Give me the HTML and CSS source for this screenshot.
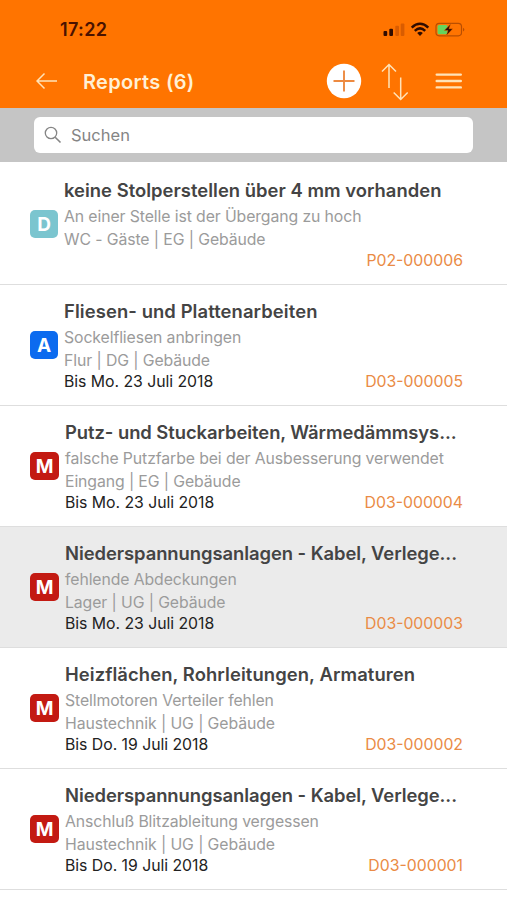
FILE: index.html
```html
<!DOCTYPE html>
<html lang="de">
<head>
<meta charset="utf-8">
<title>Reports</title>
<link rel="stylesheet" href="styles.css">
</head>
<body>
<header class="header">
  <div class="status">
    <span class="time">17:22</span>
    <svg class="status-icons" width="84" height="18" viewBox="0 0 84 18">
      <g fill="#300c00"><rect x="0.5" y="10" width="3.7" height="5" rx="1"/><rect x="6.3" y="7.7" width="3.7" height="7.3" rx="1"/></g>
      <g fill="#d95c00"><rect x="12.3" y="4.8" width="3.7" height="10.2" rx="1"/><rect x="17.7" y="2.5" width="3.7" height="12.5" rx="1"/></g>
      <g fill="none" stroke="#300c00" stroke-width="2.5"><path d="M28.700 6.600Q37 -1 45.300 6.600"/><path d="M31.800 9.800Q37 5 42.200 9.800"/></g>
      <path d="M34.200 12Q37 9.700 39.800 12L37 15Z" fill="#300c00"/>
      <rect x="53" y="2.400" width="25.500" height="12.400" rx="3.200" fill="none" stroke="#b94e00" stroke-width="1.200"/>
      <path d="M80.200 6.800Q82.500 8.700 80.200 10.600Z" fill="#a94600"/>
      <rect x="54.600" y="4" width="10" height="9.200" rx="1.500" fill="#65d45c"/>
      <path d="M67.800 2.800L61.200 9.600H65L63.200 14.800L69.800 7.700H66Z" fill="#300c00" stroke="#ff7400" stroke-width=".4"/>
    </svg>
  </div>
  <nav class="toolbar">
    <svg class="back" width="22" height="18" viewBox="0 0 22 18" fill="none" stroke="#ffe3b8" stroke-width="1.500"><path d="M8.500 1.500L1 9L8.500 16.500M1 9H21"/></svg>
    <h1 class="heading">Reports (6)</h1>
    <svg class="add" width="36" height="36" viewBox="0 0 36 36"><circle cx="18" cy="18" r="17.200" fill="#fff"/><path d="M18 7.500V28.500M7.500 18H28.500" stroke="#ed8a40" stroke-width="1.900"/></svg>
    <svg class="sort" width="28" height="38" viewBox="0 0 28 38" fill="none" stroke="#ffe3b8" stroke-width="1.500"><path d="M8 25V1.500M1 8.500L8 1.500L15 8.500M19.700 14.500V36.500M12.700 29.500L19.700 36.500L26.700 29.500"/></svg>
    <svg class="menu" width="28" height="18" viewBox="0 0 28 18" stroke="#ffe3b8" stroke-width="2.400" stroke-linecap="round"><path d="M1.700 2.600H25.800M1.700 9H25.800M1.700 15.400H25.800"/></svg>
  </nav>
</header>
<div class="searchbar">
  <label class="search">
    <svg width="18" height="18" viewBox="0 0 18 18" fill="none" stroke="#858585" stroke-width="1.300"><circle cx="7" cy="7" r="5.700"/><path d="M11.200 11.200L16.500 16.500" stroke-width="1.600"/></svg>
    <span>Suchen</span>
  </label>
</div>
<main class="list">
  <article class="row">
    <span class="badge teal">D</span>
    <div class="body"><h2 class="title">keine Stolperstellen über 4 mm vorhanden</h2><p class="text">An einer Stelle ist der Übergang zu hoch</p><p class="text">WC - Gäste | EG | Gebäude</p><div class="meta"><span></span><span class="code">P02-000006</span></div></div>
  </article>
  <article class="row">
    <span class="badge blue">A</span>
    <div class="body"><h2 class="title loose">Fliesen- und Plattenarbeiten</h2><p class="text">Sockelfliesen anbringen</p><p class="text">Flur | DG | Gebäude</p><div class="meta"><span>Bis Mo. 23 Juli 2018</span><span class="code">D03-000005</span></div></div>
  </article>
  <article class="row">
    <span class="badge red">M</span>
    <div class="body"><h2 class="title tight">Putz- und Stuckarbeiten, Wärmedämmsys...</h2><p class="text">falsche Putzfarbe bei der Ausbesserung verwendet</p><p class="text">Eingang | EG | Gebäude</p><div class="meta"><span>Bis Mo. 23 Juli 2018</span><span class="code">D03-000004</span></div></div>
  </article>
  <article class="row selected">
    <span class="badge red">M</span>
    <div class="body"><h2 class="title tight">Niederspannungsanlagen - Kabel, Verlege...</h2><p class="text">fehlende Abdeckungen</p><p class="text">Lager | UG | Gebäude</p><div class="meta"><span>Bis Mo. 23 Juli 2018</span><span class="code">D03-000003</span></div></div>
  </article>
  <article class="row">
    <span class="badge red">M</span>
    <div class="body"><h2 class="title loose">Heizflächen, Rohrleitungen, Armaturen</h2><p class="text">Stellmotoren Verteiler fehlen</p><p class="text">Haustechnik | UG | Gebäude</p><div class="meta"><span>Bis Do. 19 Juli 2018</span><span class="code">D03-000002</span></div></div>
  </article>
  <article class="row">
    <span class="badge red">M</span>
    <div class="body"><h2 class="title tight">Niederspannungsanlagen - Kabel, Verlege...</h2><p class="text">Anschluß Blitzableitung vergessen</p><p class="text">Haustechnik | UG | Gebäude</p><div class="meta"><span>Bis Do. 19 Juli 2018</span><span class="code">D03-000001</span></div></div>
  </article>
</main>
</body>
</html>
```
FILE: styles.css
```css
* { box-sizing: border-box; }
body { margin: 0; height: 900px; overflow: hidden; background: #fff; font-family: Inter, "Liberation Sans", sans-serif; }
h1, h2, p { margin: 0; }
svg { display: block; flex: none; }
.header { height: 108px; background: #ff7400; }
.status { display: flex; align-items: center; justify-content: space-between; height: 58px; padding: 0 40px 0 60px; }
.time { font-size: 18px; font-weight: 600; color: #4a1200; letter-spacing: .35px; }
.status-icons { margin-top: 1px; }
.toolbar { display: flex; align-items: center; height: 46px; padding: 0 44px 0 36px; }
.heading { flex: 1; margin-left: 25px; font-size: 20px; line-height: 24px; padding-top: 1px; font-weight: 600; letter-spacing: .3px; color: #fff0d5; white-space: nowrap; }
.add { margin-right: 19px; }
.sort { margin-right: 26px; margin-top: 2px; }
.searchbar { height: 54px; padding: 9px 34px 0; background: #c5c5c5; }
.search { display: flex; align-items: center; gap: 9px; height: 36px; padding-left: 10px; border-radius: 6px; background: #fff; color: #858585; font-size: 16.5px; }
.list { padding-top: 2px; }
.row { display: flex; height: 121px; padding: 13px 44px 0 30px; border-bottom: 1px solid #dedede; }
.selected { background: #ebebeb; }
.badge { flex: none; width: 28px; height: 28px; margin-top: 32.5px; border-radius: 5px; color: #fff; font-size: 19px; line-height: 30px; font-weight: 700; text-align: center; }
.teal { background: #7bc5cf; }
.blue { background: #0c6bef; }
.red { width: 29px; background: #c31a12; }
.body { flex: 1; min-width: 0; margin-left: 6px; white-space: nowrap; }
.title { margin-bottom: 1px; font-size: 18.4px; line-height: 27px; font-weight: 600; letter-spacing: .03px; color: #444; }
.loose { letter-spacing: .1px; }
.tight { letter-spacing: -.05px; }
.text { font-size: 15.8px; line-height: 23px; letter-spacing: -.1px; color: #9b9b9b; }
.meta { display: flex; justify-content: space-between; font-size: 15.8px; line-height: 20px; letter-spacing: -.03px; color: #222; }
.code { color: #ea8b45; letter-spacing: 0; }
```
